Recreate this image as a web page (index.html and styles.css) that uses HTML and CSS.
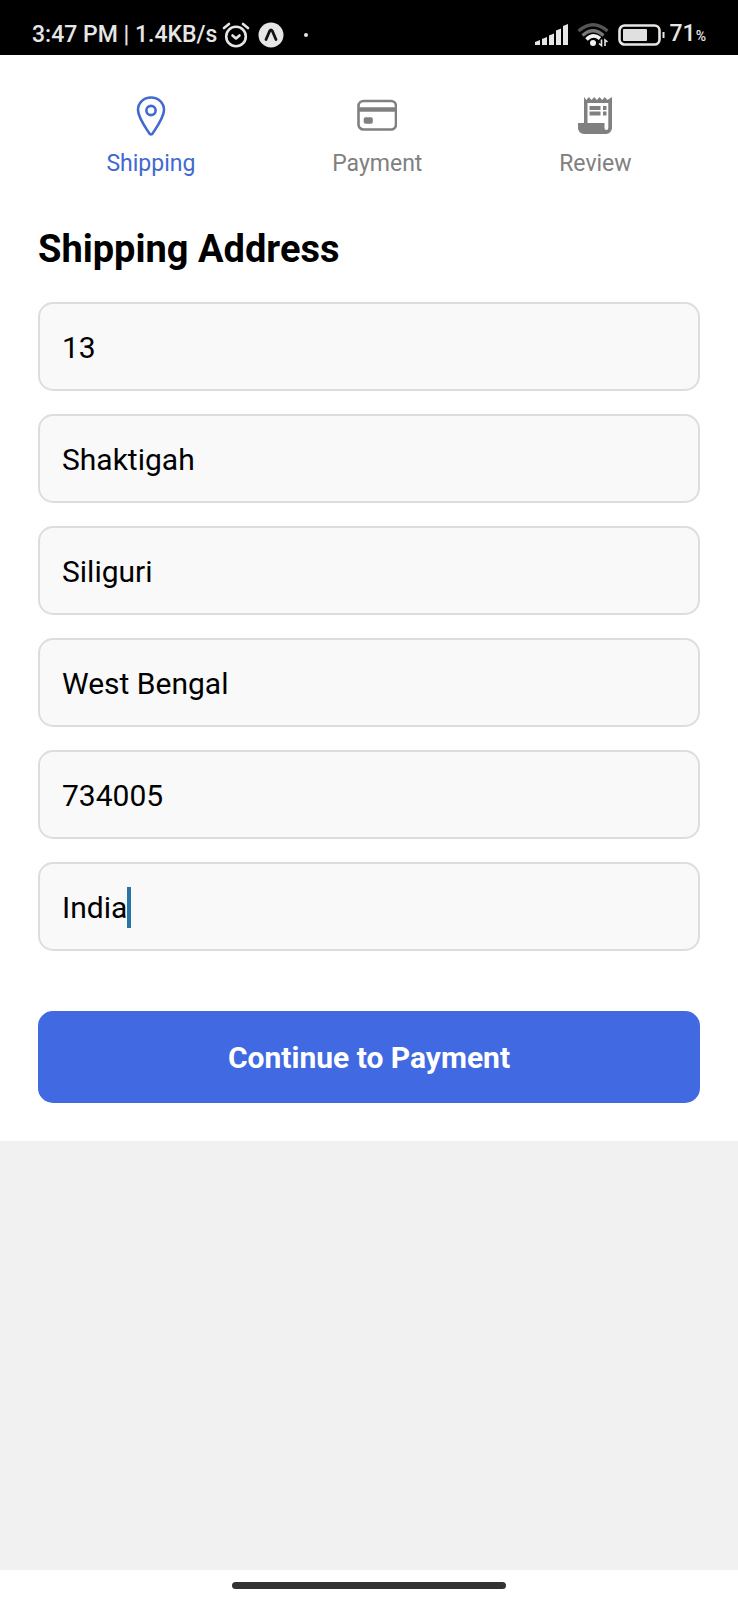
FILE: index.html
```html
<!DOCTYPE html>
<html lang="en">
<head>
<meta charset="utf-8">
<meta name="viewport" content="width=device-width, initial-scale=1">
<title>Shipping Address</title>
<link rel="stylesheet" href="styles.css">
</head>
<body>
<div class="status-bar">
  <div class="status-left">
    <span>3:47 PM | 1.4KB/s</span>
    <svg class="icon-alarm" viewBox="0 0 28 28" width="28" height="28" fill="none" stroke="#e6e6e6" stroke-width="2.6" stroke-linecap="round" stroke-linejoin="round" aria-hidden="true">
      <circle cx="14" cy="15.500" r="9.800"/><path d="M10.500 14.500l3.500 3 3.500-3M2 7l5-4M26 7l-5-4"/>
    </svg>
    <svg class="icon-expo" viewBox="0 0 26 26" width="26" height="26" aria-hidden="true">
      <circle cx="13" cy="13" r="12.500" fill="#e6e6e6"/><path d="M8 17.500l3.700-8.500q1.300-2 2.600 0l3.700 8.500" fill="none" stroke="#111" stroke-width="2.800" stroke-linecap="round"/>
    </svg>
    <span class="status-dot"></span>
  </div>
  <div class="status-right">
    <svg viewBox="0 0 34 24" width="34" height="24" fill="#e6e6e6" aria-hidden="true">
      <path d="M0 19l5-2v5H0zM7 16l5-2v8H7zM14 12.500l5-2v11.500H14zM21 7.500l5-2v16.500H21zM28 3l5-2v21H28z"/>
    </svg>
    <svg class="icon-wifi" viewBox="0 0 32 26" width="32" height="26" fill="none" stroke-width="3.200" aria-hidden="true">
      <path d="M1.500 9Q16-3.500 30.500 9" stroke="#555"/><path d="M5.500 13.500Q16 4 26.500 13.500" stroke="#777"/><path d="M9.500 17.500Q16 11 23 16.500" stroke="#f2f2f2" stroke-width="3.600"/>
      <circle cx="16" cy="21" r="3" fill="#f2f2f2"/><path d="M24.500 17.500v6l-2.500-2M28 24v-6l2.500 2" stroke="#e6e6e6" stroke-width="1.600"/>
    </svg>
    <svg class="icon-battery" viewBox="0 0 48 22" width="48" height="22" aria-hidden="true">
      <rect x="1.500" y="1.500" width="40" height="19" rx="5" fill="none" stroke="#e6e6e6" stroke-width="2.600"/><rect x="5" y="5" width="24" height="12" rx="1" fill="#e0e0e0"/><path d="M44.500 8h2v6h-2z" fill="#e6e6e6"/>
    </svg>
    <span class="battery-level">71<small class="percent">%</small></span>
  </div>
</div>

<main class="checkout">
  <ol class="steps">
    <li class="step step-active" aria-current="step">
      <svg viewBox="0 0 40 40" width="40" height="40" fill="none" stroke="currentColor" stroke-width="2.600" stroke-linejoin="round" aria-hidden="true">
        <path d="M20 1.500C12.500 1.500 7 7 7 14c0 7 6.500 16 11.200 23.200 1 1.500 2.600 1.500 3.600 0C26.500 30 33 21 33 14 33 7 27.500 1.500 20 1.500z"/><circle cx="20" cy="14.500" r="4.600"/>
      </svg>
      <span>Shipping</span>
    </li>
    <li class="step">
      <svg viewBox="0 0 40 40" width="40" height="40" fill="none" stroke="currentColor" stroke-width="2.600" aria-hidden="true">
        <rect x="1.500" y="5" width="37.500" height="28.500" rx="5"/><path d="M2 13.500h36.500" stroke-width="4.600"/><rect x="8" y="22.500" width="6.500" height="4" rx=".5" fill="currentColor"/>
      </svg>
      <span>Payment</span>
    </li>
    <li class="step">
      <svg viewBox="0 0 40 40" width="40" height="40" fill="currentColor" aria-hidden="true">
        <path fill-rule="evenodd" d="M9 1l2.300 3 2.600-3 2.700 3 2.600-3 2.700 3 2.600-3 2.700 3 2.600-3 2.600 3L37 1v31a6 6 0 0 1-6 6H9a6 6 0 0 1-6-6v-5h6zM12.500 7v20H29.500v5a1.900 1.900 0 0 0 3.800 0V7z"/>
        <path d="M14.500 10h11v4h-11zM28 10h3.500v4H28zM14.500 15.500h11v4h-11zM28 15.500h3.500v4H28z"/>
      </svg>
      <span>Review</span>
    </li>
  </ol>

  <form class="address-form">
    <h1 class="title">Shipping Address</h1>
    <div class="fields">
      <label class="field"><input class="input" type="text" aria-label="House number" value="13"></label>
      <label class="field"><input class="input" type="text" aria-label="Street" value="Shaktigah"></label>
      <label class="field"><input class="input" type="text" aria-label="City" value="Siliguri"></label>
      <label class="field"><input class="input" type="text" aria-label="State" value="West Bengal"></label>
      <label class="field"><input class="input" type="text" aria-label="Postal code" value="734005"></label>
      <label class="field"><input class="input" type="text" aria-label="Country" value="India"><span class="caret"></span></label>
    </div>
    <button class="submit" type="button">Continue to Payment</button>
  </form>
</main>

<footer class="nav-bar"><div class="nav-handle"></div></footer>
</body>
</html>
```
FILE: styles.css
```css
* {
  box-sizing: border-box;
}

body {
  margin: 0;
  min-height: 100vh;
  display: flex;
  flex-direction: column;
  background: #f1f1f1;
  color: #000;
  font-family: Roboto, "Noto Sans", sans-serif;
}

.status-bar {
  display: flex;
  justify-content: space-between;
  align-items: center;
  padding: 14px 32px 0;
  height: 55px;
  background: #000;
  color: #e6e6e6;
  font-size: 23px;
  line-height: 40px;
  font-weight: 500;
}

.status-left,
.status-right {
  display: flex;
  align-items: center;
}

.icon-alarm {
  margin-left: 5px;
}

.icon-expo {
  margin-left: 8px;
}

.status-dot {
  width: 4px;
  height: 4px;
  margin-left: 20px;
  border-radius: 50%;
  background: #e6e6e6;
}

.icon-wifi {
  margin-left: 8px;
}

.icon-battery {
  margin: 0 4px 0 9px;
}

.battery-level {
  display: flex;
  align-items: baseline;
}

.percent {
  font-size: 14px;
}

.checkout {
  padding: 41px 38px 38px;
  background: #fff;
}

.steps {
  display: flex;
  justify-content: space-around;
  margin: 0;
  padding: 0;
  list-style: none;
}

.step {
  display: flex;
  flex-direction: column;
  align-items: center;
  gap: 13px;
  color: #808080;
  font-size: 23px;
  line-height: 30px;
}

.step-active {
  color: #4169cf;
}

.title {
  margin: 48px 0 30px;
  font-size: 38px;
  line-height: 45px;
  font-weight: 700;
}

.fields {
  display: flex;
  flex-direction: column;
  gap: 23px;
}

.field {
  display: flex;
  align-items: center;
  height: 89px;
  padding: 2px 22px 0;
  border: 2px solid #ddd;
  border-radius: 15px;
  background: #f9f9f9;
  cursor: text;
}

.input {
  field-sizing: content;
  max-width: 100%;
  padding: 0;
  border: 0;
  outline: 0;
  background: transparent;
  color: #000;
  font: 400 30px/40px Roboto, "Noto Sans", sans-serif;
}

.caret {
  width: 4px;
  height: 41px;
  background: #2874a6;
}

.submit {
  display: block;
  width: 100%;
  margin-top: 60px;
  padding: 27px 0 25px;
  border: 0;
  border-radius: 15px;
  background: #4169e1;
  color: #fff;
  font: 700 30px/40px Roboto, "Noto Sans", sans-serif;
}

.nav-bar {
  display: flex;
  justify-content: center;
  margin-top: auto;
  padding: 12px 0 11px;
  background: #fff;
}

.nav-handle {
  width: 37%;
  height: 7px;
  border-radius: 4px;
  background: #333;
}
```
